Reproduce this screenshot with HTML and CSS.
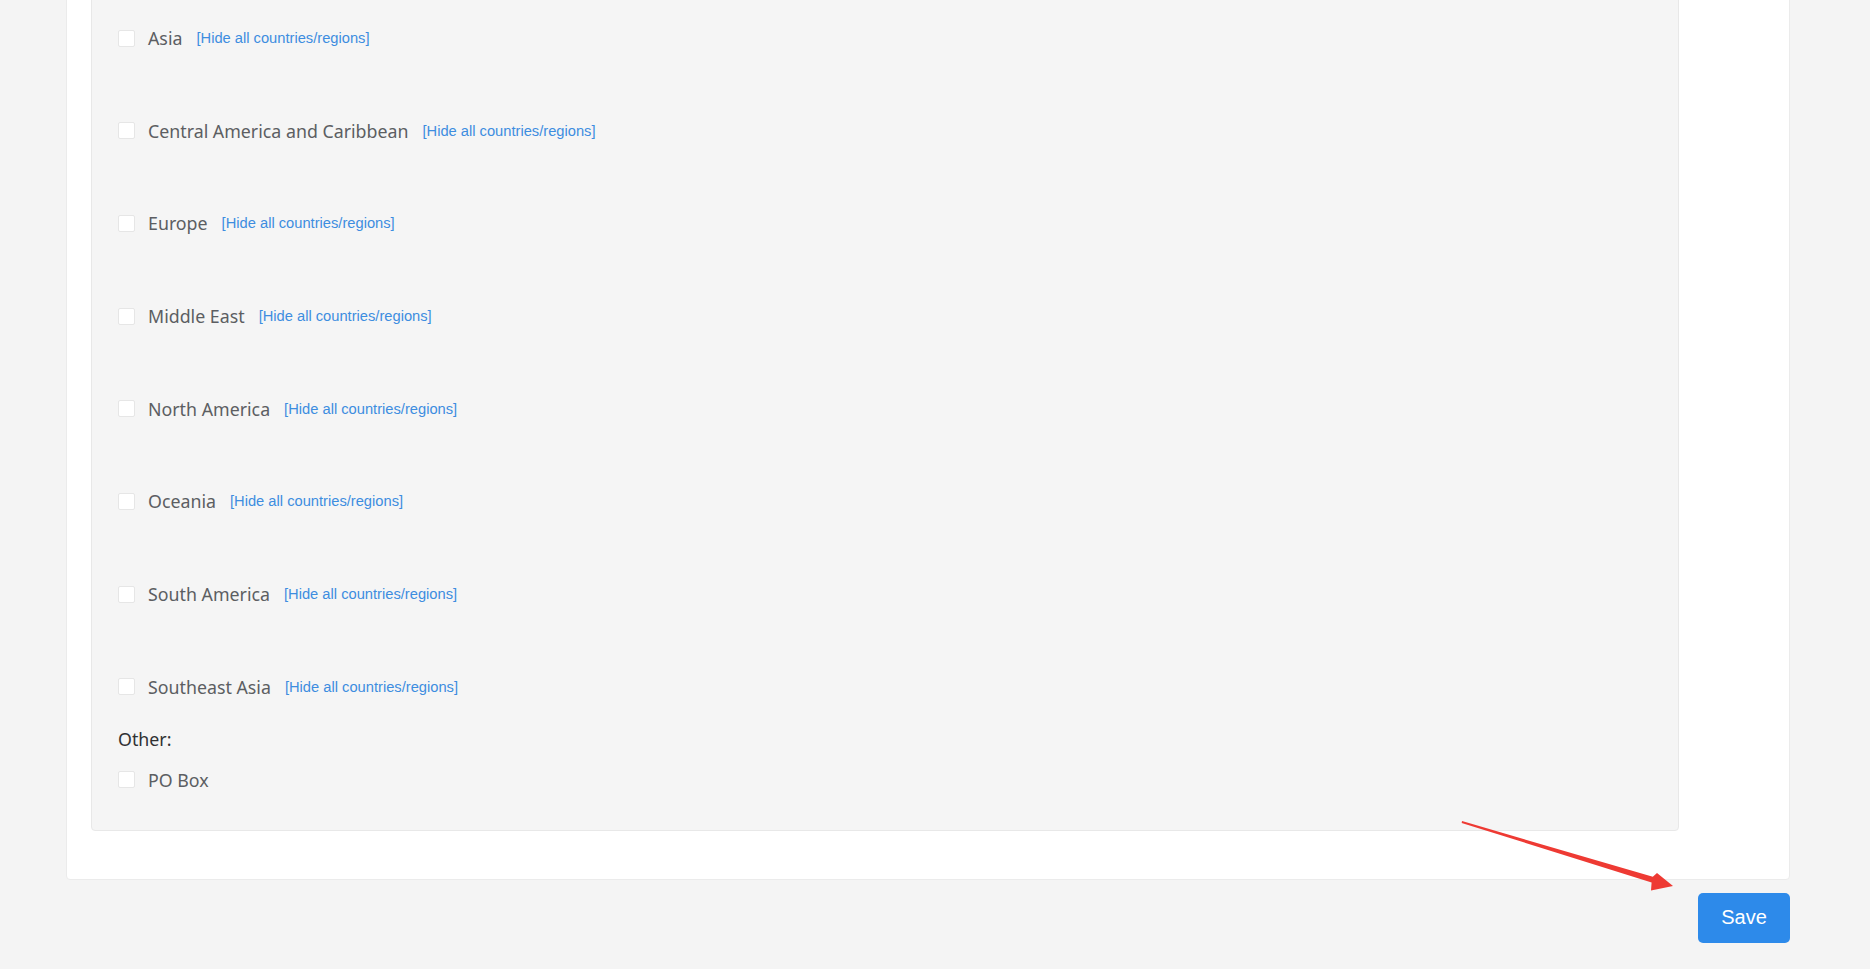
FILE: index.html
```html
<!DOCTYPE html>
<html lang="en">
<head>
    <meta charset="UTF-8">
    <meta name="viewport" content="width=device-width, initial-scale=1.0">
    <title>Shipping Regions</title>
    <link rel="stylesheet" href="styles.css">
</head>
<body>

    <div class="page">
        <div class="card">
            <div class="panel">
                <ul class="regions">
                    <li class="region">
                        <label class="check"><span class="box"></span><span class="name">Asia</span></label>
                        <a class="toggle" href="#">[Hide all countries/regions]</a>
                    </li>
                    <li class="region">
                        <label class="check"><span class="box"></span><span class="name">Central America and Caribbean</span></label>
                        <a class="toggle" href="#">[Hide all countries/regions]</a>
                    </li>
                    <li class="region">
                        <label class="check"><span class="box"></span><span class="name">Europe</span></label>
                        <a class="toggle" href="#">[Hide all countries/regions]</a>
                    </li>
                    <li class="region">
                        <label class="check"><span class="box"></span><span class="name">Middle East</span></label>
                        <a class="toggle" href="#">[Hide all countries/regions]</a>
                    </li>
                    <li class="region">
                        <label class="check"><span class="box"></span><span class="name">North America</span></label>
                        <a class="toggle" href="#">[Hide all countries/regions]</a>
                    </li>
                    <li class="region">
                        <label class="check"><span class="box"></span><span class="name">Oceania</span></label>
                        <a class="toggle" href="#">[Hide all countries/regions]</a>
                    </li>
                    <li class="region">
                        <label class="check"><span class="box"></span><span class="name">South America</span></label>
                        <a class="toggle" href="#">[Hide all countries/regions]</a>
                    </li>
                    <li class="region">
                        <label class="check"><span class="box"></span><span class="name">Southeast Asia</span></label>
                        <a class="toggle" href="#">[Hide all countries/regions]</a>
                    </li>
                </ul>

                <div class="other">
                    <div class="other-title">Other:</div>
                    <label class="check"><span class="box"></span><span class="name">PO Box</span></label>
                </div>
            </div>
        </div>

        <div class="actions">
            <button class="save-btn">Save</button>
        </div>

        <!-- annotation arrow pointing at the save button -->
        <svg class="arrow" width="1870" height="969" viewBox="0 0 1870 969">
            <polygon points="1462,821 1652.8,876.8 1657,873 1673,886 1651,890.5 1651.6,882.4 1461.7,823" fill="#ee3a33"/>
        </svg>
    </div>

</body>
</html>
```

FILE: styles.css
```css
body {
    margin: 0;
    background-color: #f4f4f4;
    font-family: "Noto Sans", Arial, sans-serif;
    overflow: hidden;
}
.page {
    position: relative;
    width: 1724px;
    margin-left: 66px;
    margin-top: -20px;
}
.card {
    background-color: #fff;
    border: 1px solid #ebebeb;
    border-radius: 4px;
    padding: 0 110px 48px 24px;
}
.panel {
    background-color: #f5f5f5;
    border: 1px solid #e8e8e8;
    border-radius: 4px;
    padding: 44px 26px 38px;
}
.regions {
    list-style: none;
    margin: 0;
    padding: 0;
    display: flex;
    flex-direction: column;
    gap: 68.7px;
}
.region {
    display: flex;
    align-items: center;
    height: 24px;
}
.check {
    display: flex;
    align-items: center;
    gap: 13px;
    height: 24px;
    cursor: pointer;
}
.box {
    width: 15px;
    height: 15px;
    background-color: #fff;
    border: 1px solid #e6e6e6;
    border-radius: 2px;
}
.name {
    font-size: 17.8px;
    line-height: 24px;
    color: #5c5e62;
}
.toggle {
    margin-left: 14px;
    font-family: "Liberation Sans", Arial, sans-serif;
    font-size: 14.7px;
    color: #3d8de0;
    text-decoration: none;
}
.other {
    margin-top: 28px;
}
.other-title {
    font-size: 17.8px;
    line-height: 24px;
    color: #303133;
    margin-bottom: 17px;
}
.actions {
    display: flex;
    justify-content: flex-end;
    margin-top: 13px;
}
.save-btn {
    width: 92px;
    height: 50px;
    border: none;
    border-radius: 5px;
    background-color: #2d8aea;
    color: #fff;
    font-family: "Liberation Sans", Arial, sans-serif;
    font-size: 20px;
    cursor: pointer;
}
.arrow {
    position: absolute;
    left: -66px;
    top: 20px;
    pointer-events: none;
}
```
